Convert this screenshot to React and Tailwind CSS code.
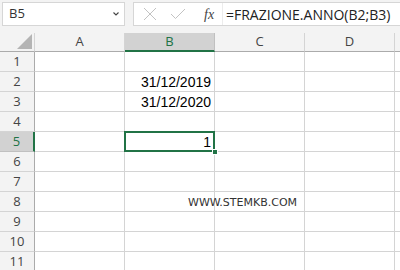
import React from 'react'

const cols = ['A', 'B', 'C', 'D']
const rows = [1, 2, 3, 4, 5, 6, 7, 8, 9, 10, 11]

const cellData = {
  '2B': '31/12/2019',
  '3B': '31/12/2020',
  '5B': '1',
}

const App = () => {
  return (
    <div className="w-[400px] h-[270px] overflow-hidden bg-white" style={{ fontFamily: '"Liberation Sans", Arial, sans-serif' }}>
      {/* formula bar */}
      <div className="h-[33px] bg-[#f3f3f3] flex items-start pt-[2px] pl-[2px]">
        <div className="w-[123px] h-[24px] bg-white border border-[#d6d6d6] flex items-center justify-between pl-[6px] pr-[4px]">
          <span className="text-[13px] text-[#333]" style={{ fontFamily: '"Open Sans", sans-serif' }}>B5</span>
          <svg width="8" height="6" viewBox="0 0 8 6">
            <path d="M1.5 1.5 L4 4 L6.5 1.5" fill="none" stroke="#444" strokeWidth="1.1" />
          </svg>
        </div>
        <div className="ml-[8px] h-[24px] flex-1 bg-white border border-[#d6d6d6] border-r-0 flex items-center">
          <div className="w-[88px] h-full flex items-center pl-[9px] gap-[13px]">
            <svg width="14" height="14" viewBox="0 0 14 14">
              <path d="M1 1 L13 13 M13 1 L1 13" stroke="#c2c2c2" strokeWidth="1" />
            </svg>
            <svg width="16" height="12" viewBox="0 0 16 12">
              <path d="M1 6 L5.5 10.5 L15 1" fill="none" stroke="#c2c2c2" strokeWidth="1" />
            </svg>
            <span className="ml-[5px] text-[14px] text-[#444] italic" style={{ fontFamily: '"Liberation Serif", serif' }}>fx</span>
          </div>
          <div className="h-full border-l border-[#ececec] flex items-center pl-[3px]">
            <span className="text-[14px] text-[#222]" style={{ fontFamily: '"Open Sans", sans-serif' }}>=FRAZIONE.ANNO(B2;B3)</span>
          </div>
        </div>
      </div>

      {/* sheet */}
      <div className="grid grid-cols-[35px_90px_90px_90px_90px_10px]">
        {/* header row */}
        <div className="h-[19px] bg-[#f3f3f3] border-b border-[#ababab] border-r border-r-[#d4d4d4] relative">
          <div className="absolute right-[2px] bottom-[2px] w-0 h-0 border-l-[15px] border-l-transparent border-b-[15px] border-b-[#b4b4b4]" />
        </div>
        {cols.map(c => (
          <div
            key={c}
            className={
              c === 'B'
                ? 'h-[19px] bg-[#d2d2d2] border-b-2 border-b-[#217346] border-r border-r-[#c0c0c0] flex items-center justify-center text-[13px] text-[#217346]'
                : 'h-[19px] bg-[#f3f3f3] border-b border-[#ababab] border-r border-r-[#d4d4d4] flex items-center justify-center text-[13px] text-[#444]'
            }
            style={{ fontFamily: '"Open Sans", sans-serif' }}
          >
            {c}
          </div>
        ))}
        <div className="h-[19px] bg-[#f3f3f3] border-b border-[#ababab]" />

        {rows.map(r => (
          <React.Fragment key={r}>
            <div
              className={
                r === 5
                  ? 'h-[20px] bg-[#d2d2d2] border-b border-[#c0c0c0] border-r-2 border-r-[#217346] flex items-center justify-center text-[13px] text-[#217346]'
                  : 'h-[20px] bg-[#f3f3f3] border-b border-[#d4d4d4] border-r border-r-[#ababab] flex items-center justify-center text-[13px] text-[#444]'
              }
              style={{ fontFamily: '"Open Sans", sans-serif' }}
            >
              {r}
            </div>
            {cols.map(c => {
              const v = cellData[`${r}${c}`]
              const selected = r === 5 && c === 'B'
              return (
                <div key={c} className={`h-[20px] border-b border-r border-[#d4d4d4] relative flex items-center justify-end pr-[3px] text-[14px] text-black ${selected ? 'z-10' : ''}`}>
                  {v && <span className="relative top-[1px]">{v}</span>}
                  {r === 8 && c === 'B' && (
                    <span className="absolute left-[63px] top-[3px] whitespace-nowrap text-[11px] text-[#333]" style={{ fontFamily: '"DejaVu Sans", Verdana, sans-serif' }}>
                      WWW.STEMKB.COM
                    </span>
                  )}
                  {selected && (
                    <>
                      <div className="absolute left-[-1px] top-[-1px] right-[-1px] bottom-[-1px] border-2 border-[#217346]" />
                      <div className="absolute right-[-4px] bottom-[-4px] w-[6px] h-[6px] bg-[#217346] border border-white" />
                    </>
                  )}
                </div>
              )
            })}
            <div className="h-[20px] border-b border-[#d4d4d4]" />
          </React.Fragment>
        ))}
      </div>
    </div>
  )
}

export default App
